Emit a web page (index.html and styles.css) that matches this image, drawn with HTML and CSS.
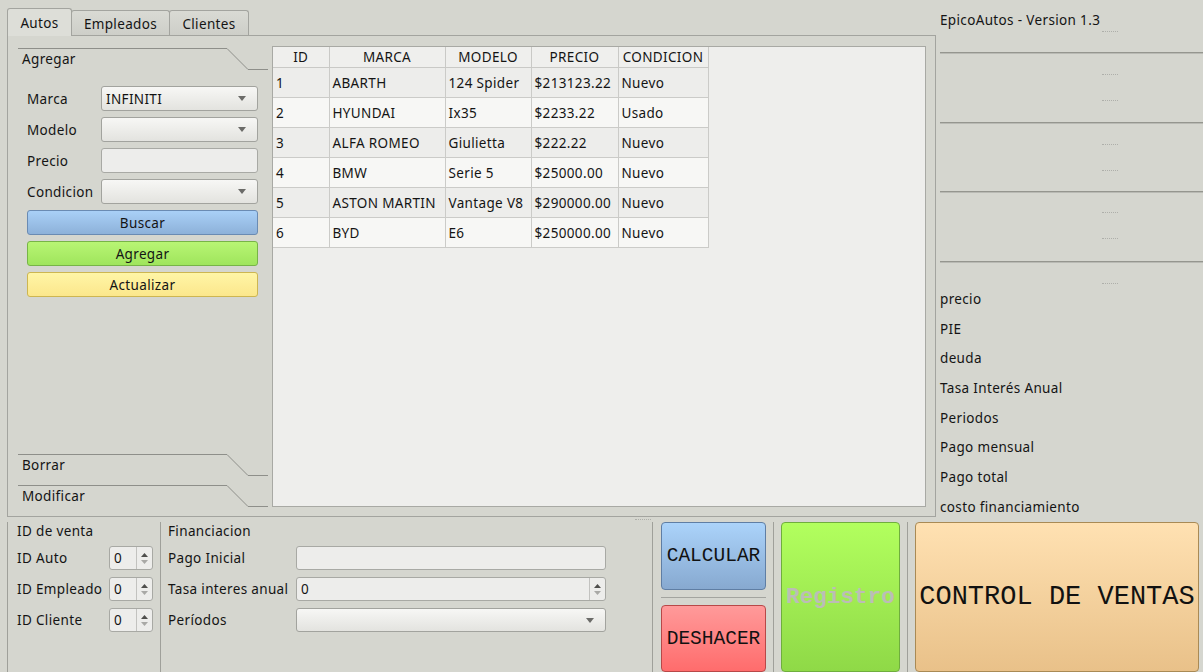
FILE: index.html
```html
<!DOCTYPE html>
<html lang="es">
<head>
<meta charset="utf-8">
<title>EpicoAutos</title>
<link rel="stylesheet" href="styles.css">
</head>
<body>
<div class="top">
  <div class="tabwidget">
    <div class="tabbar">
      <div class="tab active w-autos">Autos</div>
      <div class="tab w-emp">Empleados</div>
      <div class="tab w-cli">Clientes</div>
    </div>
    <div class="pane">
      <div class="toolbox">
        <div class="tb-head">
          <div class="tb-label">Agregar</div>
          <svg class="tb-diag" width="21" height="22" viewBox="0 0 21 22"><line x1="0" y1="0.5" x2="21" y2="21.5" stroke="#8e8f8a" stroke-width="1"/></svg>
          <div class="tb-tail"></div>
        </div>
        <div class="tb-page">
          <div class="frow"><span class="flabel">Marca</span>
            <div class="combo"><span>INFINITI</span><svg class="arrow" width="8" height="5" viewBox="0 0 8 5"><polygon points="0,0 8,0 4,5" fill="#6b6b68"/></svg></div></div>
          <div class="frow"><span class="flabel">Modelo</span>
            <div class="combo"><span></span><svg class="arrow" width="8" height="5" viewBox="0 0 8 5"><polygon points="0,0 8,0 4,5" fill="#6b6b68"/></svg></div></div>
          <div class="frow"><span class="flabel">Precio</span>
            <div class="field"></div></div>
          <div class="frow"><span class="flabel">Condicion</span>
            <div class="combo"><span></span><svg class="arrow" width="8" height="5" viewBox="0 0 8 5"><polygon points="0,0 8,0 4,5" fill="#6b6b68"/></svg></div></div>
          <div class="btn b-blue">Buscar</div>
          <div class="btn b-green">Agregar</div>
          <div class="btn b-yellow">Actualizar</div>
        </div>
        <div class="tb-head">
          <div class="tb-label">Borrar</div>
          <svg class="tb-diag" width="21" height="22" viewBox="0 0 21 22"><line x1="0" y1="0.5" x2="21" y2="21.5" stroke="#8e8f8a" stroke-width="1"/></svg>
          <div class="tb-tail"></div>
        </div>
        <div class="tb-head tb-last">
          <div class="tb-label">Modificar</div>
          <svg class="tb-diag" width="21" height="22" viewBox="0 0 21 22"><line x1="0" y1="0.5" x2="21" y2="21.5" stroke="#8e8f8a" stroke-width="1"/></svg>
          <div class="tb-tail"></div>
        </div>
      </div>
      <div class="tablewrap">
        <table class="grid">
          <colgroup><col class="c1"><col class="c2"><col class="c3"><col class="c4"><col class="c5"></colgroup>
          <thead><tr><th>ID</th><th>MARCA</th><th>MODELO</th><th>PRECIO</th><th>CONDICION</th></tr></thead>
          <tbody>
            <tr><td>1</td><td>ABARTH</td><td>124 Spider</td><td>$213123.22</td><td>Nuevo</td></tr>
            <tr><td>2</td><td>HYUNDAI</td><td>Ix35</td><td>$2233.22</td><td>Usado</td></tr>
            <tr><td>3</td><td>ALFA ROMEO</td><td>Giulietta</td><td>$222.22</td><td>Nuevo</td></tr>
            <tr><td>4</td><td>BMW</td><td>Serie 5</td><td>$25000.00</td><td>Nuevo</td></tr>
            <tr><td>5</td><td>ASTON MARTIN</td><td>Vantage V8</td><td>$290000.00</td><td>Nuevo</td></tr>
            <tr><td>6</td><td>BYD</td><td>E6</td><td>$250000.00</td><td>Nuevo</td></tr>
          </tbody>
        </table>
      </div>
    </div>
  </div>
  <div class="side">
    <div class="title">EpicoAutos - Version 1.3</div>
    <div class="dots m1"></div>
    <div class="hr m20"></div>
    <div class="dots m20"></div>
    <div class="dots m25"></div>
    <div class="hr m21"></div>
    <div class="dots m20"></div>
    <div class="dots m25"></div>
    <div class="hr m20"></div>
    <div class="dots m19"></div>
    <div class="dots m25"></div>
    <div class="hr m22"></div>
    <div class="dots m20"></div>
    <div class="labels">
      <div class="slabel">precio</div>
      <div class="slabel">PIE</div>
      <div class="slabel">deuda</div>
      <div class="slabel">Tasa Interés Anual</div>
      <div class="slabel">Periodos</div>
      <div class="slabel">Pago mensual</div>
      <div class="slabel">Pago total</div>
      <div class="slabel">costo financiamiento</div>
    </div>
  </div>
</div>
<div class="bottom">
  <div class="handle"><div class="dots hdots"></div></div>
  <div class="brow">
    <div class="vline"></div>
    <div class="grp grp1">
      <div class="gtitle">ID de venta</div>
      <div class="grow"><span class="glabel l1">ID Auto</span>
        <div class="spin small"><span class="sval">0</span><div class="sbtns"><svg width="7" height="4" viewBox="0 0 7 4"><polygon points="0,4 7,4 3.5,0" fill="#4f4f4c"/></svg><svg width="7" height="4" viewBox="0 0 7 4"><polygon points="0,0 7,0 3.5,4" fill="#a9a9a6"/></svg></div></div></div>
      <div class="grow"><span class="glabel l1">ID Empleado</span>
        <div class="spin small"><span class="sval">0</span><div class="sbtns"><svg width="7" height="4" viewBox="0 0 7 4"><polygon points="0,4 7,4 3.5,0" fill="#4f4f4c"/></svg><svg width="7" height="4" viewBox="0 0 7 4"><polygon points="0,0 7,0 3.5,4" fill="#a9a9a6"/></svg></div></div></div>
      <div class="grow"><span class="glabel l1">ID Cliente</span>
        <div class="spin small"><span class="sval">0</span><div class="sbtns"><svg width="7" height="4" viewBox="0 0 7 4"><polygon points="0,4 7,4 3.5,0" fill="#4f4f4c"/></svg><svg width="7" height="4" viewBox="0 0 7 4"><polygon points="0,0 7,0 3.5,4" fill="#a9a9a6"/></svg></div></div></div>
    </div>
    <div class="vline"></div>
    <div class="grp grp2">
      <div class="gtitle">Financiacion</div>
      <div class="grow"><span class="glabel l2">Pago Inicial</span><div class="field wide"></div></div>
      <div class="grow"><span class="glabel l2">Tasa interes anual</span>
        <div class="spin wide"><span class="sval">0</span><div class="sbtns"><svg width="7" height="4" viewBox="0 0 7 4"><polygon points="0,4 7,4 3.5,0" fill="#4f4f4c"/></svg><svg width="7" height="4" viewBox="0 0 7 4"><polygon points="0,0 7,0 3.5,4" fill="#a9a9a6"/></svg></div></div></div>
      <div class="grow"><span class="glabel l2">Períodos</span>
        <div class="combo wide"><span></span><svg class="arrow" width="8" height="5" viewBox="0 0 8 5"><polygon points="0,0 8,0 4,5" fill="#6b6b68"/></svg></div></div>
    </div>
    <div class="vline"></div>
    <div class="col3">
      <div class="bigbtn calc">CALCULAR</div>
      <div class="hsep"></div>
      <div class="bigbtn desh">DESHACER</div>
    </div>
    <div class="vline"></div>
    <div class="col4">
      <div class="bigbtn reg">Registro</div>
    </div>
    <div class="vline"></div>
    <div class="col5">
      <div class="bigbtn ctrl">CONTROL DE VENTAS</div>
    </div>
  </div>
</div>
</body>
</html>
```

FILE: styles.css
```css
* { box-sizing: border-box; margin: 0; padding: 0; }
html, body { width: 1203px; height: 672px; overflow: hidden; }
body {
  margin: 0;
  background: #d5d6cf;
  font-family: "Noto Sans", "DejaVu Sans", sans-serif;
  font-size: 13.5px;
  letter-spacing: 0.35px;
  color: #141414;
}

/* ---------- top area ---------- */
.top { display: flex; height: 517px; }
.tabwidget { width: 936px; padding: 8px 0 0 7px; display: flex; flex-direction: column; }
.tabbar { display: flex; align-items: flex-end; height: 27px; position: relative; z-index: 1; }
.tab {
  height: 25px;
  border: 1px solid #a3a49f;
  border-bottom: none;
  border-radius: 3px 3px 0 0;
  background: linear-gradient(#d9dad4, #cdcec8);
  display: flex; align-items: center; justify-content: center;
  padding-top: 1px;
  margin-right: -1px;
}
.tab.active { height: 28px; margin-bottom: -1px; background: #dddED8; }
.w-autos { width: 65px; }
.w-emp { width: 99px; }
.w-cli { width: 80px; }

.pane {
  flex: 1;
  border: 1px solid #a3a49f;
  display: flex;
  gap: 4px;
  padding: 10px 9px 9px 10px;
}

.toolbox { width: 250px; display: flex; flex-direction: column; padding-top: 2px; }
.tb-head { display: flex; height: 22px; flex: none; }
.tb-label { width: 209px; border-top: 1px solid #8e8f8a; padding-left: 4px; line-height: 20px; }
.tb-diag { flex: none; display: block; }
.tb-tail { flex: 1; border-bottom: 1px solid #8e8f8a; }
.tb-last { margin-top: 9px; }
.tb-page { flex: 1; padding: 16px 10px 0 9px; }

.frow { display: flex; align-items: center; height: 25px; margin-bottom: 6px; }
.flabel { width: 74px; flex: none; }
.combo {
  flex: 1;
  height: 25px;
  border: 1px solid #a2a39e;
  border-radius: 3px;
  background: linear-gradient(#f7f7f5, #e3e3df);
  display: flex; align-items: center; justify-content: space-between;
  padding: 0 11px 0 4px;
  color: #111;
}
.combo .arrow { display: block; }
.field {
  flex: 1;
  height: 25px;
  border: 1px solid #a8a9a4;
  border-radius: 3px;
  background: #ededeb;
}
.btn {
  height: 25px;
  border: 1px solid;
  border-radius: 3px;
  margin-bottom: 6px;
  display: flex; align-items: center; justify-content: center;
}
.b-blue { background: linear-gradient(#a9d0f7, #8db1d9); border-color: #6a8bb3; }
.b-green { background: linear-gradient(#b8f574, #9fe55c); border-color: #77b447; }
.b-yellow { background: linear-gradient(#fff5a6, #fbe78c); border-color: #cdb651; }

.tablewrap { flex: 1; border: 1px solid #a8a9a4; background: #eeeeec; overflow: hidden; }
.grid { border-collapse: collapse; table-layout: fixed; width: 435px; }
.c1 { width: 56px; } .c2 { width: 116px; } .c3 { width: 86px; } .c4 { width: 87px; } .c5 { width: 90px; }
.grid th {
  height: 20px; font-weight: normal; text-align: center;
  border-right: 1px solid #c9c9c6; border-bottom: 1px solid #c9c9c6;
  background: #efefed; padding: 1px 0 0 0; white-space: nowrap; overflow: hidden;
}
.grid td {
  height: 30px; padding: 1px 0 0 3px; white-space: nowrap; overflow: hidden;
  border-right: 1px solid #cbcbc8; border-bottom: 1px solid #cbcbc8;
}
.grid tbody tr:nth-child(odd) td { background: #ededeb; }
.grid tbody tr:nth-child(even) td { background: #f7f7f5; }

/* ---------- right side ---------- */
.side { flex: 1; padding-left: 4px; }
.title { margin-top: 9px; height: 21px; line-height: 21px; padding-top: 1px; }
.dots { height: 1px; width: 16px; margin-left: 162px; border-top: 1px dotted #aeafaa; }
.hr { height: 2px; border-top: 1px solid #95968f; border-bottom: 1px solid #b9bab4; }
.m1 { margin-top: 1px; } .m19 { margin-top: 19px; } .m20 { margin-top: 20px; }
.m21 { margin-top: 21px; } .m22 { margin-top: 22px; } .m25 { margin-top: 25px; }
.labels { padding-top: 1px; }
.slabel { height: 29.7px; line-height: 29.7px; white-space: nowrap; }

/* ---------- bottom ---------- */
.bottom { height: 155px; }
.handle { height: 5px; padding-top: 2px; }
.hdots { margin-left: 635px; }
.brow { display: flex; height: 150px; padding-left: 7px; }
.vline { width: 1px; flex: none; background: #9fa09a; }
.grp1 { width: 152px; padding-left: 9px; }
.grp2 { width: 491px; padding-left: 7px; }
.gtitle { height: 17px; line-height: 17px; margin-bottom: 7px; padding-top: 1px; }
.grow { display: flex; align-items: center; height: 24px; margin-bottom: 7px; }
.glabel { flex: none; white-space: nowrap; }
.l1 { width: 92px; }
.l2 { width: 128px; }
.spin {
  height: 24px; border: 1px solid #a8a9a4; border-radius: 3px; background: #ededeb;
  display: flex; align-items: stretch;
}
.spin.small { width: 44px; }
.spin.wide { width: 310px; }
.sval { flex: 1; padding-left: 4px; line-height: 22px; }
.sbtns {
  width: 16px; border-left: 1px solid #c2c2bf;
  display: flex; flex-direction: column; align-items: center; justify-content: center; gap: 3px;
}
.sbtns svg { display: block; }
.field.wide, .combo.wide { flex: none; width: 310px; height: 24px; }

.col3 { width: 120px; padding: 0 7px 0 8px; display: flex; flex-direction: column; }
.col4 { width: 133px; padding: 0 7px 0 7px; display: flex; }
.col5 { width: 295px; padding: 0 4px 0 7px; display: flex; }
.bigbtn {
  border: 1px solid; border-radius: 4px;
  display: flex; align-items: center; justify-content: center;
  font-family: "Liberation Mono", "Courier New", monospace;
  letter-spacing: 0;
  color: #111;
  white-space: nowrap;
}
.calc { height: 68px; font-size: 19.5px; background: linear-gradient(#abd3fa, #87a9d0); border-color: #5f7ea4; }
.hsep { height: 1px; margin: 7px 0; background: #a3a49f; }
.desh { height: 67px; font-size: 19.5px; background: linear-gradient(#ff9a9a, #ff6c6c); border-color: #b84848; }
.reg { flex: 1; font-size: 22.7px; font-weight: bold; color: #bcbdb6; background: linear-gradient(#b2ff5e, #8fd947); border-color: #6fae3d; }
.ctrl { flex: 1; font-size: 27px; background: linear-gradient(#ffe1b2, #e9c189); border-color: #a98a55; }
```
